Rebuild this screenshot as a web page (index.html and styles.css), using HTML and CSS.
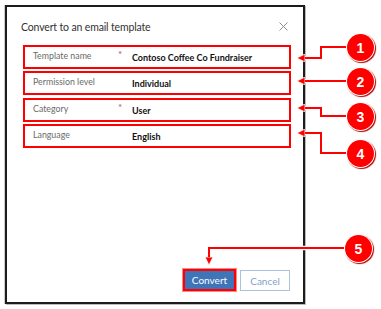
FILE: index.html
```html
<!DOCTYPE html>
<html>
<head>
<meta charset="utf-8">
<link rel="stylesheet" href="styles.css">
</head>
<body>
<div class="dialog">
  <div class="header">
    <div class="title">Convert to an email template</div>
    <svg class="close" width="9" height="9" viewBox="0 0 9 9"><path d="M0.5,0.5 L8.5,8.5 M8.5,0.5 L0.5,8.5" stroke="#8a8a8a" stroke-width="1" fill="none"/></svg>
  </div>
  <div class="fields">
    <div class="field"><span class="label">Template name</span><span class="req">*</span><span class="value">Contoso Coffee Co Fundraiser</span></div>
    <div class="field"><span class="label">Permission level</span><span class="req"></span><span class="value">Individual</span></div>
    <div class="field f3"><span class="label">Category</span><span class="req">*</span><span class="value">User</span></div>
    <div class="field"><span class="label">Language</span><span class="req"></span><span class="value">English</span></div>
  </div>
  <div class="footer">
    <button class="btn primary">Convert</button>
    <button class="btn secondary">Cancel</button>
  </div>
</div>
<svg class="callouts" width="381" height="309" viewBox="0 0 381 309">
  <defs>
    <marker id="ah" markerWidth="8" markerHeight="8" refX="7" refY="4" orient="auto" markerUnits="userSpaceOnUse">
      <path d="M0,0 L8,4 L0,8 Z" fill="#f00" stroke="#fff" stroke-width="0.8"/>
    </marker>
  </defs>
  <g fill="none" stroke-linejoin="miter">
    <g stroke="#fff" stroke-width="4.5">
      <polyline points="350,47 321,47 321,58 300,58"/>
      <polyline points="350,81 300,81"/>
      <polyline points="350,116 321,116 321,108 300,108"/>
      <polyline points="350,153 321,153 321,133 300,133"/>
      <polyline points="348,248 209,248 209,260"/>
    </g>
    <g stroke="#f00" stroke-width="2">
      <polyline points="350,47 321,47 321,58 298,58" marker-end="url(#ah)"/>
      <polyline points="350,81 298,81" marker-end="url(#ah)"/>
      <polyline points="350,116 321,116 321,108 298,108" marker-end="url(#ah)"/>
      <polyline points="350,153 321,153 321,133 298,133" marker-end="url(#ah)"/>
      <polyline points="348,248 209,248 209,264" marker-end="url(#ah)"/>
    </g>
  </g>
</svg>
<div class="badge b1">1</div>
<div class="badge b2">2</div>
<div class="badge b3">3</div>
<div class="badge b4">4</div>
<div class="badge b5">5</div>
</body>
</html>
```
FILE: styles.css
```css
html, body {
  margin: 0;
  padding: 0;
  background: #fff;
  width: 381px;
  height: 309px;
  overflow: hidden;
  font-family: Lato, "Open Sans", sans-serif;
}
body {
  position: relative;
  padding: 5px 0 0 5px;
  box-sizing: border-box;
}
.dialog {
  width: 300px;
  height: 299px;
  box-sizing: border-box;
  border: 2px solid #1c1c1c;
  box-shadow: 1px 1px 0 #bbb, -1px 0 0 #ccc;
  display: flex;
  flex-direction: column;
  background: #fff;
}
.header {
  display: flex;
  justify-content: space-between;
  align-items: center;
  padding: 10px 15px 0 14px;
  height: 20px;
}
.title {
  font-size: 10.5px;
  letter-spacing: -0.15px;
  color: #333;
}
.close {
  display: block;
  margin-top: -2px;
}
.fields {
  margin: 8px 0 0 16px;
  display: flex;
  flex-direction: column;
  gap: 2px;
}
.field {
  width: 268px;
  height: 24px;
  box-sizing: border-box;
  border: 2.5px solid #f00;
  display: flex;
  align-items: center;
  padding-left: 8px;
  position: relative;
}
.f3 { margin-top: 1px; }
.label {
  width: 85px;
  font-size: 8.8px;
  color: #6a6a6a;
  margin-top: -4px;
}
.req {
  width: 14px;
  color: #c0504d;
  font-size: 10px;
  margin-top: -6px;
}
.value {
  font-size: 9px;
  font-weight: bold;
  color: #111;
}
.footer {
  margin-top: auto;
  display: flex;
  justify-content: flex-end;
  gap: 4px;
  padding: 0 13px 11px 0;
}
.btn {
  font-family: Lato, "Open Sans", sans-serif;
  font-size: 10px;
  height: 22px;
  box-sizing: border-box;
  padding: 0;
}
.primary {
  width: 53px;
  background: #3e74b8;
  color: #fff;
  border: 2px solid #f00;
  outline: 1px solid #f88;
}
.secondary {
  width: 50px;
  height: 21px;
  margin-top: 1px;
  background: #fff;
  color: #7f9fc8;
  border: 1px solid #a9c2e0;
}
.callouts {
  position: absolute;
  left: 0;
  top: 0;
}
.badge {
  position: absolute;
  width: 27px;
  height: 27px;
  border-radius: 50%;
  background: #f00;
  color: #fff;
  font-family: "Liberation Sans", Arial, sans-serif;
  font-weight: bold;
  font-size: 14px;
  display: flex;
  align-items: center;
  justify-content: center;
  box-shadow: 0 0 0 1px #fff, 1px 1px 1px 1px #a00;
}
.b1 { left: 347px; top: 34px; }
.b2 { left: 347px; top: 68px; }
.b3 { left: 347px; top: 103px; }
.b4 { left: 347px; top: 140px; }
.b5 { left: 345px; top: 235px; }
```
